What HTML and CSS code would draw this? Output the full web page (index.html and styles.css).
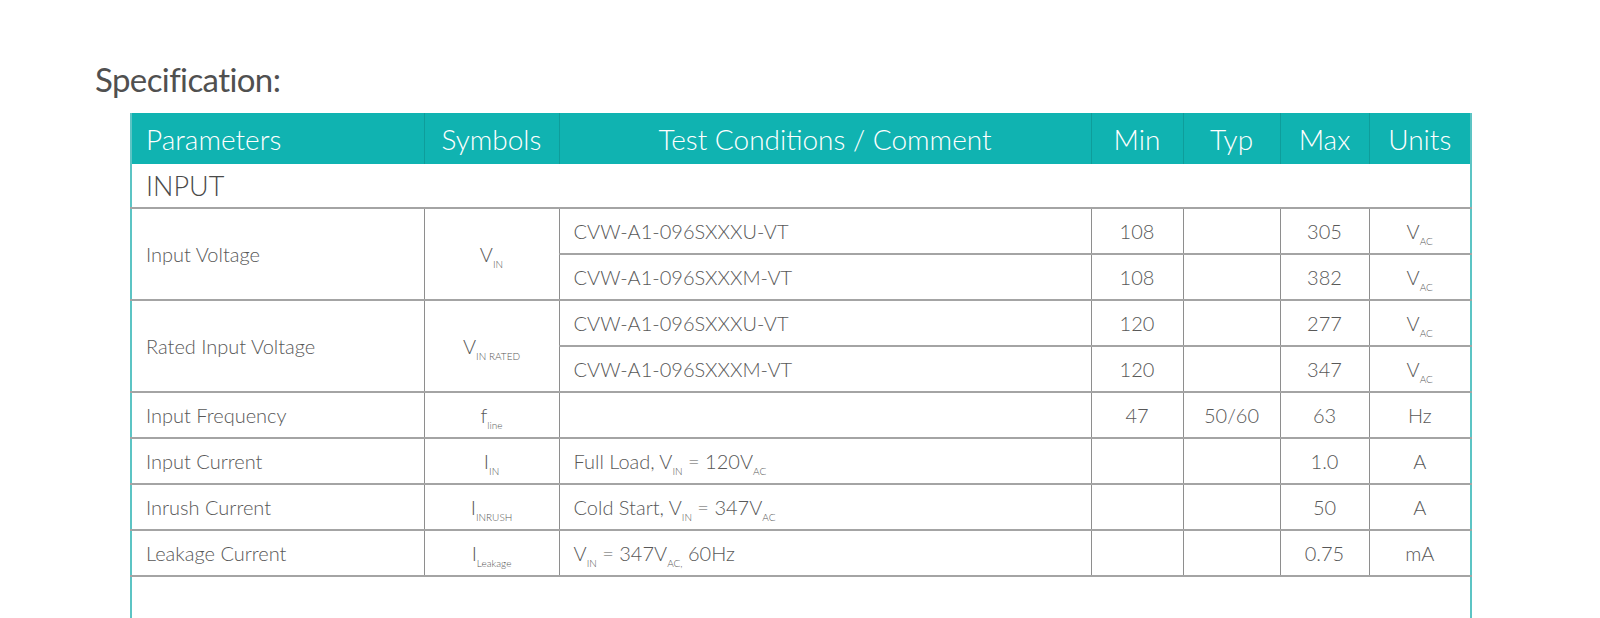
FILE: index.html
```html
<!DOCTYPE html>
<html>
<head>
<meta charset="utf-8">
<link rel="stylesheet" href="styles.css">
</head>
<body>
<div class="page">
  <h1 class="title">Specification:</h1>
  <div class="table-wrap">
    <table class="spec">
      <colgroup>
        <col class="c-param"><col class="c-sym"><col class="c-cond"><col class="c-min"><col class="c-typ"><col class="c-max"><col class="c-unit">
      </colgroup>
      <thead>
        <tr>
          <th class="left">Parameters</th>
          <th>Symbols</th>
          <th>Test Conditions / Comment</th>
          <th>Min</th>
          <th>Typ</th>
          <th>Max</th>
          <th>Units</th>
        </tr>
      </thead>
      <tbody>
        <tr class="section"><td colspan="7">INPUT</td></tr>
        <tr>
          <td class="left" rowspan="2">Input Voltage</td>
          <td class="center" rowspan="2">V<sub>IN</sub></td>
          <td class="left">CVW-A1-096SXXXU-VT</td>
          <td class="center">108</td><td></td><td class="center">305</td>
          <td class="center">V<sub>AC</sub></td>
        </tr>
        <tr>
          <td class="left">CVW-A1-096SXXXM-VT</td>
          <td class="center">108</td><td></td><td class="center">382</td>
          <td class="center">V<sub>AC</sub></td>
        </tr>
        <tr>
          <td class="left" rowspan="2">Rated Input Voltage</td>
          <td class="center" rowspan="2">V<sub>IN RATED</sub></td>
          <td class="left">CVW-A1-096SXXXU-VT</td>
          <td class="center">120</td><td></td><td class="center">277</td>
          <td class="center">V<sub>AC</sub></td>
        </tr>
        <tr>
          <td class="left">CVW-A1-096SXXXM-VT</td>
          <td class="center">120</td><td></td><td class="center">347</td>
          <td class="center">V<sub>AC</sub></td>
        </tr>
        <tr>
          <td class="left">Input Frequency</td>
          <td class="center">f<sub>line</sub></td>
          <td></td>
          <td class="center">47</td><td class="center">50/60</td><td class="center">63</td>
          <td class="center">Hz</td>
        </tr>
        <tr>
          <td class="left">Input Current</td>
          <td class="center">I<sub>IN</sub></td>
          <td class="left">Full Load, V<sub>IN</sub> = 120V<sub>AC</sub></td>
          <td></td><td></td><td class="center">1.0</td>
          <td class="center">A</td>
        </tr>
        <tr>
          <td class="left">Inrush Current</td>
          <td class="center">I<sub>INRUSH</sub></td>
          <td class="left">Cold Start, V<sub>IN</sub> = 347V<sub>AC</sub></td>
          <td></td><td></td><td class="center">50</td>
          <td class="center">A</td>
        </tr>
        <tr>
          <td class="left">Leakage Current</td>
          <td class="center">I<sub>Leakage</sub></td>
          <td class="left">V<sub>IN</sub> = 347V<sub>AC,</sub> 60Hz</td>
          <td></td><td></td><td class="center">0.75</td>
          <td class="center">mA</td>
        </tr>
        <tr class="tail"><td colspan="7"></td></tr>
      </tbody>
    </table>
  </div>
</div>
</body>
</html>
```

FILE: styles.css
```css
html, body {
  margin: 0;
  padding: 0;
  background: #ffffff;
  overflow: hidden;
}

body {
  font-family: "Lato", "Open Sans", "Liberation Sans", sans-serif;
  font-weight: 300;
  color: #555555;
}

.page {
  padding-top: 56px;
  height: 562px;
}

.title {
  margin: 0 0 0 95px;
  font-size: 33px;
  font-weight: 400;
  line-height: 46px;
  color: #505050;
  letter-spacing: -0.6px;
  height: 57px;
}

.table-wrap {
  margin-left: 130px;
  width: 1342px;
}

.spec {
  width: 100%;
  border-collapse: collapse;
  table-layout: fixed;
  border-left: 2px solid #5cc4c4;
  border-right: 2px solid #5cc4c4;
}

.c-param { width: 293px; }
.c-sym { width: 135px; }
.c-cond { width: 532px; }
.c-min { width: 92px; }
.c-typ { width: 97px; }
.c-max { width: 89px; }
.c-unit { width: 102px; }

.spec thead th {
  background: #10b3b1;
  color: #ffffff;
  font-size: 28px;
  font-weight: 300;
  height: 51px;
  padding: 0;
  text-align: center;
  border-left: 1px solid #0e9d9b;
  border-right: 1px solid #0e9d9b;
  box-sizing: border-box;
}

.spec thead th.left {
  text-align: left;
  padding-left: 14px;
}

.spec td {
  height: 44px;
  padding: 0;
  font-size: 20px;
  color: #585858;
  border: 1px solid #8e8e8e;
  border-bottom: 2px solid #a4a4a4;
  border-top: 2px solid #a4a4a4;
  white-space: nowrap;
  vertical-align: middle;
}

.spec td.left {
  text-align: left;
  padding-left: 14px;
}

.spec td.center {
  text-align: center;
}

.spec tr.section td {
  height: 43px;
  font-size: 27px;
  color: #4a4a4a;
  padding-left: 14px;
  border-top: none;
  border-left: none;
  border-right: none;
}

.spec tr.tail td {
  height: 60px;
  border: none;
}

.spec sub {
  font-size: 10px;
  vertical-align: -6px;
  line-height: 0;
  letter-spacing: 0;
}
```
